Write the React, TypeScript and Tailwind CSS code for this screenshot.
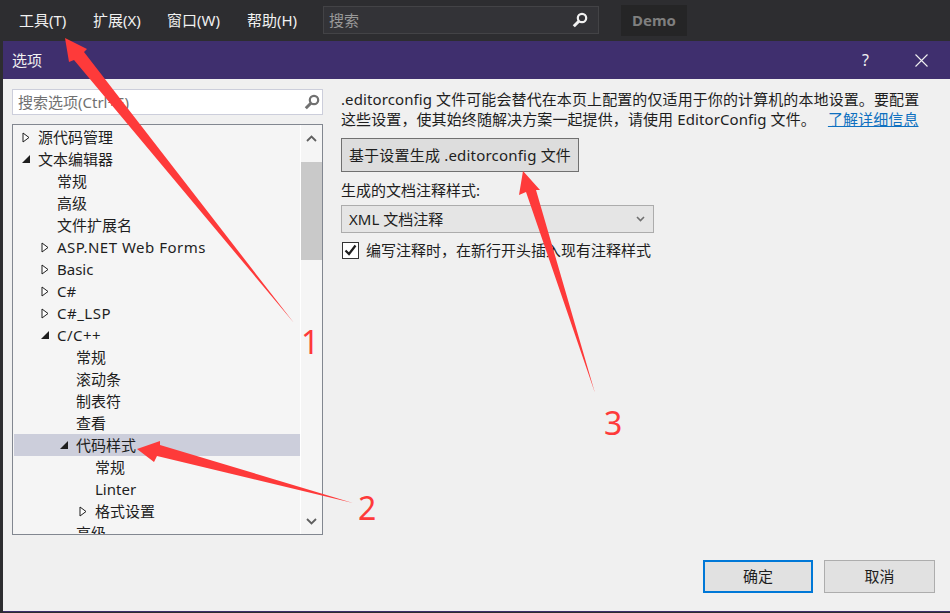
const fontStack = "font-['Noto_Sans','Noto_Sans_CJK_SC',sans-serif]";

type Row = { label: string; indent: number; arrow?: "open" | "closed"; selected?: boolean; wide?: boolean };

const rows: Row[] = [
  { label: "源代码管理", indent: 0, arrow: "closed" },
  { label: "文本编辑器", indent: 0, arrow: "open" },
  { label: "常规", indent: 1 },
  { label: "高级", indent: 1 },
  { label: "文件扩展名", indent: 1 },
  { label: "ASP.NET Web Forms", indent: 1, arrow: "closed", wide: true },
  { label: "Basic", indent: 1, arrow: "closed" },
  { label: "C#", indent: 1, arrow: "closed" },
  { label: "C#_LSP", indent: 1, arrow: "closed", wide: true },
  { label: "C/C++", indent: 1, arrow: "open", wide: true },
  { label: "常规", indent: 2 },
  { label: "滚动条", indent: 2 },
  { label: "制表符", indent: 2 },
  { label: "查看", indent: 2 },
  { label: "代码样式", indent: 2, arrow: "open", selected: true },
  { label: "常规", indent: 3 },
  { label: "Linter", indent: 3 },
  { label: "格式设置", indent: 3, arrow: "closed" },
  { label: "高级", indent: 2 },
];

function SearchIcon({ color }: { color: string }) {
  return (
    <svg width="16" height="16" viewBox="0 0 16 16" fill="none">
      <circle cx="10" cy="6" r="4.2" stroke={color} strokeWidth="2.2" />
      <path d="M6.8 9.2 1.8 14.2" stroke={color} strokeWidth="3" />
    </svg>
  );
}

function Arrow({ type }: { type: "open" | "closed" }) {
  if (type === "open") {
    return (
      <svg width="8" height="8" viewBox="0 0 8 8">
        <path d="M8 0V8H0Z" fill="#1e1e1e" />
      </svg>
    );
  }
  return (
    <svg width="8" height="11" viewBox="0 0 8 11">
      <path d="M1 1 7 5.5 1 10Z" fill="#fff" stroke="#1e1e1e" />
    </svg>
  );
}

function TreeRow({ row }: { row: Row }) {
  return (
    <div
      className={`h-[22px] shrink-0 flex items-center text-[15px] text-[#1e1e1e] whitespace-nowrap ${
        row.selected ? "bg-[#cccedb]" : ""
      }`}
    >
      <div
        className={`w-[24px] shrink-0 flex items-center justify-center ${
          row.indent === 0 ? "ml-0" : row.indent === 1 ? "ml-[19px]" : row.indent === 2 ? "ml-[38px]" : "ml-[57px]"
        }`}
      >
        {row.arrow && <Arrow type={row.arrow} />}
      </div>
      <span className={row.wide ? "tracking-[0.5px]" : ""}>{row.label}</span>
    </div>
  );
}

function MenuBar() {
  return (
    <div className="h-[41px] shrink-0 bg-[#2d2d30] flex items-center pl-[19px] text-[15px] text-[#f1f1f1]">
      <span className="w-[74px]">工具(T)</span>
      <span className="w-[74px]">扩展(X)</span>
      <span className="w-[80px]">窗口(W)</span>
      <span className="w-[76px]">帮助(H)</span>
      <div className="w-[276px] h-[28px] mb-[1px] border border-[#434346] bg-[#333337] flex items-center justify-between pl-[5px] pr-[10px] text-[#999999]">
        <span>搜索</span>
        <SearchIcon color="#f1f1f1" />
      </div>
      <div className="ml-[22px] w-[66px] h-[31px] bg-[#252526] flex items-center justify-center font-bold text-[15px] text-[#7f7f7f]">
        Demo
      </div>
    </div>
  );
}

function TreePanel() {
  return (
    <div className="w-[311px] shrink-0 pt-[10px] pl-0">
      <div className="h-[26px] bg-white border border-[#cccedb] flex items-center justify-between pl-[5px] pr-[2px] text-[15px] text-[#717171]">
        <span>搜索选项(Ctrl+E)</span>
        <SearchIcon color="#717171" />
      </div>
      <div className="mt-[9px] h-[411px] border border-[#828790] bg-[#f5f5f5] flex">
        <div className="w-[288px] pl-[1px] pt-[1px] flex flex-col overflow-hidden">
          {rows.map((row, i) => (
            <TreeRow key={i} row={row} />
          ))}
        </div>
        <div className="w-[22px] border-l border-[#ffffff] flex flex-col items-center justify-between">
          <div className="h-[37px] w-full flex flex-col">
            <div className="h-[37px] flex items-center justify-center pb-[10px]">
              <svg width="11" height="7" viewBox="0 0 11 7" fill="none">
                <path d="M1 6 5.5 1.5 10 6" stroke="#606060" strokeWidth="1.8" />
              </svg>
            </div>
          </div>
          <div className="w-full h-[98px] bg-[#c9c9c9] mb-auto" />
          <div className="h-[22px] flex items-center justify-center pb-[4px]">
            <svg width="11" height="7" viewBox="0 0 11 7" fill="none">
              <path d="M1 1 5.5 5.5 10 1" stroke="#606060" strokeWidth="1.8" />
            </svg>
          </div>
        </div>
      </div>
    </div>
  );
}

function SettingsPanel() {
  return (
    <div className="ml-[18px] pt-[10px] text-[15px] text-[#1e1e1e] flex-1">
      <div className="leading-[20px] w-[590px] tracking-[0.1px]">
        <p className="whitespace-nowrap">.editorconfig 文件可能会替代在本页上配置的仅适用于你的计算机的本地设置。要配置</p>
        <p className="whitespace-nowrap">
          这些设置，使其始终随解决方案一起提供，请使用 EditorConfig 文件。
          <span className="ml-[12px] text-[#0e70c0] underline">了解详细信息</span>
        </p>
      </div>
      <button className="mt-[9px] w-[238px] h-[34px] bg-[#dddddd] border border-[#707070] flex items-center justify-center whitespace-nowrap tracking-[0.2px]">
        基于设置生成 .editorconfig 文件
      </button>
      <p className="mt-[8px] leading-[20px]">生成的文档注释样式:</p>
      <div className="mt-[5px] w-[313px] h-[28px] bg-[#e5e5e5] border border-[#acacac] flex items-center justify-between pl-[7px] pr-[8px]">
        <span>XML 文档注释</span>
        <svg width="9" height="6" viewBox="0 0 9 6" fill="none">
          <path d="M1 1 4.5 4.5 8 1" stroke="#707070" strokeWidth="1.6" />
        </svg>
      </div>
      <div className="mt-[7px] ml-[1px] flex items-center gap-[7px] h-[20px]">
        <div className="w-[17px] h-[17px] bg-white border border-[#333333] flex items-center justify-center">
          <svg width="13" height="12" viewBox="0 0 13 12" fill="none">
            <path d="M1.5 6.5 5 10 11.5 1.5" stroke="#1e1e1e" strokeWidth="2.2" />
          </svg>
        </div>
        <span>编写注释时，在新行开头插入现有注释样式</span>
      </div>
    </div>
  );
}

function Dialog() {
  return (
    <div className="flex-1 ml-[3px] flex flex-col border-b border-[#3f3069]">
      <div className="h-[38px] shrink-0 bg-[#3f2f6e] flex items-center justify-between pl-[9px] pr-[22px] text-[15px] text-[#f1f1f1]">
        <span>选项</span>
        <div className="flex items-center gap-[46px]">
          <span className="text-[16px]">?</span>
          <svg width="13" height="13" viewBox="0 0 13 13" fill="none">
            <path d="M.5.5 12.5 12.5M12.5.5.5 12.5" stroke="#f1f1f1" strokeWidth="1.1" />
          </svg>
        </div>
      </div>
      <div className="flex-1 bg-[#f0f0f0] flex flex-col pl-[9px]">
        <div className="flex h-[481px]">
          <TreePanel />
          <SettingsPanel />
        </div>
        <div className="flex justify-end gap-[11px] pr-[15px] text-[15px] text-[#1e1e1e]">
          <button className="w-[110px] h-[33px] bg-[#e1e1e1] border-2 border-[#0078d7]">确定</button>
          <button className="w-[111px] h-[33px] bg-[#e1e1e1] border border-[#adadad]">取消</button>
        </div>
      </div>
    </div>
  );
}

function Annotations() {
  return (
    <>
      <svg className="absolute left-0 top-0" width="950" height="613" viewBox="0 0 950 613">
        <path d="M65 38 87 49 84 52 294 323 74 60 69 62Z" fill="#fe3a3a" />
        <path d="M137 449 160 441 160 445 353 503 157 456 154 462Z" fill="#fe3a3a" />
        <path d="M523 171 540 190 536 190 595 393 526 192 519 195Z" fill="#fe3a3a" />
      </svg>
      <span className="absolute left-[301px] top-[323px] text-[32px] leading-[38px] text-[#fe3a3a]">1</span>
      <span className="absolute left-[358px] top-[489px] text-[32px] leading-[38px] text-[#fe3a3a]">2</span>
      <span className="absolute left-[604px] top-[404px] text-[32px] leading-[38px] text-[#fe3a3a]">3</span>
    </>
  );
}

export default function App() {
  return (
    <div className={`relative w-[950px] h-[613px] overflow-hidden bg-[#2d2d30] flex flex-col ${fontStack}`}>
      <MenuBar />
      <div className="flex h-[571px]">
        <Dialog />
      </div>
      <Annotations />
    </div>
  );
}
